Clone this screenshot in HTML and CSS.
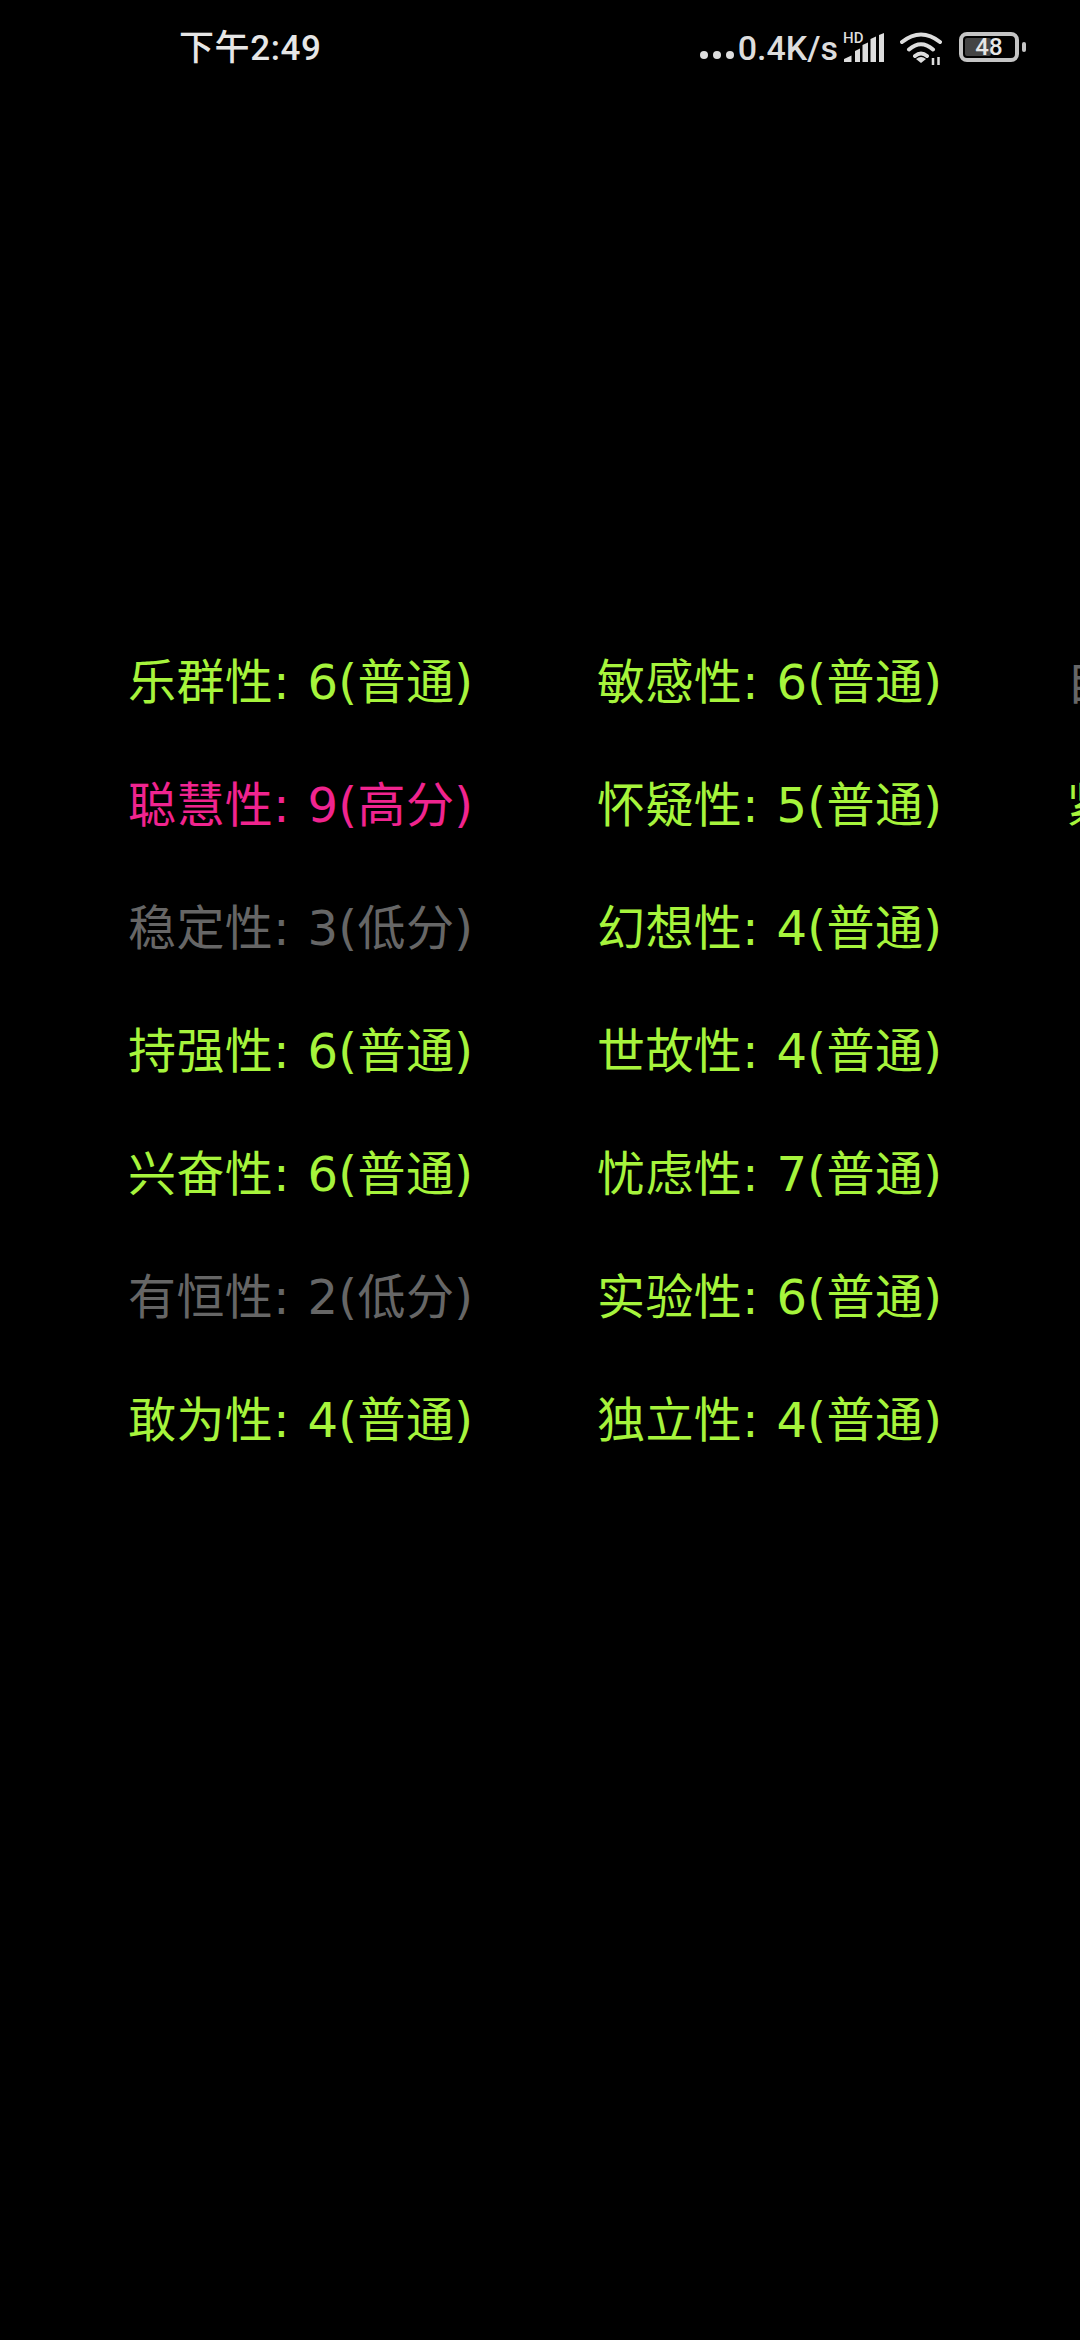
FILE: index.html
```html
<!DOCTYPE html>
<html lang="zh-CN">
<head>
  <meta charset="UTF-8">
  <meta name="viewport" content="width=device-width, initial-scale=1.0">
  <title>16PF</title>
  <link rel="stylesheet" href="styles.css">
</head>
<body>
  <!-- Status bar -->
  <div class="status-bar">
    <span class="clock">下午2:49</span>
    <div class="status-right">
      <div class="dots"><i></i><i></i><i></i></div>
      <span class="speed">0.4K/s</span>
      <div class="signal">
        <span class="hd">HD</span>
        <svg width="40" height="29" viewBox="0 0 40 29">
          <path d="M0 29 V26 L7.5 22.5 V29 Z M11 29 V18 L16 15.5 V29 Z M18.5 29 V12 L24 9.5 V29 Z M26.5 29 V6 L32 3.5 V29 Z M35 29 V2 L40 0 V29 Z" fill="#ddd"/>
        </svg>
      </div>
      <svg class="wifi" width="42" height="34" viewBox="0 0 42 34">
        <path d="M2 10 Q21 -5 40 10 M9 17.5 Q21 7 33 17.5 M15 24 Q21 19 27 24" fill="none" stroke="#ddd" stroke-width="4" stroke-linecap="round"/>
        <path d="M16 27 Q21 23 26 27 L21 31 Z" fill="#ddd"/>
        <path d="M33 33 V26 M38.5 33 V25" stroke="#ddd" stroke-width="2.5"/>
      </svg>
      <div class="battery">
        <div class="battery-body">
          <div class="battery-fill"></div>
          <span class="battery-num">48</span>
        </div>
        <div class="battery-cap"></div>
      </div>
    </div>
  </div>

  <!-- Trait scores -->
  <div class="trait-grid">
    <div class="trait normal">乐群性: 6(普通)</div>
    <div class="trait normal">敏感性: 6(普通)</div>
    <div class="trait low">自律性: 3(低分)</div>
    <div class="trait high">聪慧性: 9(高分)</div>
    <div class="trait normal">怀疑性: 5(普通)</div>
    <div class="trait normal">紧张性: 6(普通)</div>
    <div class="trait low">稳定性: 3(低分)</div>
    <div class="trait normal">幻想性: 4(普通)</div>
    <div class="trait empty"></div>
    <div class="trait normal">持强性: 6(普通)</div>
    <div class="trait normal">世故性: 4(普通)</div>
    <div class="trait empty"></div>
    <div class="trait normal">兴奋性: 6(普通)</div>
    <div class="trait normal">忧虑性: 7(普通)</div>
    <div class="trait empty"></div>
    <div class="trait low">有恒性: 2(低分)</div>
    <div class="trait normal">实验性: 6(普通)</div>
    <div class="trait empty"></div>
    <div class="trait normal">敢为性: 4(普通)</div>
    <div class="trait normal">独立性: 4(普通)</div>
    <div class="trait empty"></div>
  </div>
</body>
</html>
```

FILE: styles.css
```css
/* General Styling */
body {
  margin: 0;
  width: 1080px;
  height: 2340px;
  overflow: hidden;
  background-color: #000;
  font-family: 'DejaVu Sans', 'Noto Sans CJK SC', sans-serif;
}

/* Status bar */
.status-bar {
  display: flex;
  justify-content: space-between;
  align-items: center;
  height: 94px;
  padding: 0 54px 0 179px;
  color: #e6e6e6;
}

.clock {
  font-family: 'Roboto', 'Noto Sans CJK SC', sans-serif;
  font-size: 35px;
  font-weight: 500;
  letter-spacing: 0.6px;
  margin-bottom: 5px;
}

.status-right {
  display: flex;
  align-items: center;
}

.dots {
  display: flex;
  gap: 5px;
  margin-top: 16px;
}

.dots i {
  width: 8px;
  height: 8px;
  border-radius: 50%;
  background-color: #ddd;
}

.speed {
  font-family: 'Roboto', sans-serif;
  font-size: 34px;
  font-weight: 500;
  color: #ddd;
  margin-left: 4px;
  margin-top: 2px;
}

.signal {
  position: relative;
  width: 40px;
  height: 29px;
  margin-left: 6px;
}

.signal svg {
  display: block;
}

.hd {
  position: absolute;
  left: -1px;
  top: -4px;
  font-family: 'Roboto', sans-serif;
  font-size: 15px;
  line-height: 18px;
  font-weight: 500;
  color: #ddd;
}

.wifi {
  margin-left: 16px;
  margin-top: 4px;
}

.battery {
  display: flex;
  align-items: center;
  margin-left: 17px;
}

.battery-body {
  position: relative;
  box-sizing: border-box;
  width: 60px;
  height: 30px;
  border: 4px solid #c4c4c4;
  border-radius: 8px;
}

.battery-fill {
  position: absolute;
  left: 2px;
  top: 2px;
  bottom: 2px;
  width: 26px;
  background-color: #444;
  border-radius: 2px;
}

.battery-num {
  position: absolute;
  left: 0;
  right: 0;
  top: -4px;
  text-align: center;
  font-family: 'Roboto', sans-serif;
  font-size: 24px;
  line-height: 30px;
  font-weight: 500;
  color: #e6e6e6;
}

.battery-cap {
  width: 4px;
  height: 10px;
  margin-left: 3px;
  background-color: #c4c4c4;
  border-radius: 2px;
}

/* Trait scores */
.trait-grid {
  display: grid;
  grid-template-columns: repeat(3, 469px);
  grid-auto-rows: 123px;
  padding: 527px 0 0 128px;
  width: 1500px;
  font-size: 48px;
  letter-spacing: 0.4px;
  word-spacing: 2px;
}

.trait {
  line-height: 123px;
  white-space: nowrap;
}

.normal {
  color: #a6f43c;
}

.high {
  color: #f0248f;
}

.low {
  color: #666;
}
```
